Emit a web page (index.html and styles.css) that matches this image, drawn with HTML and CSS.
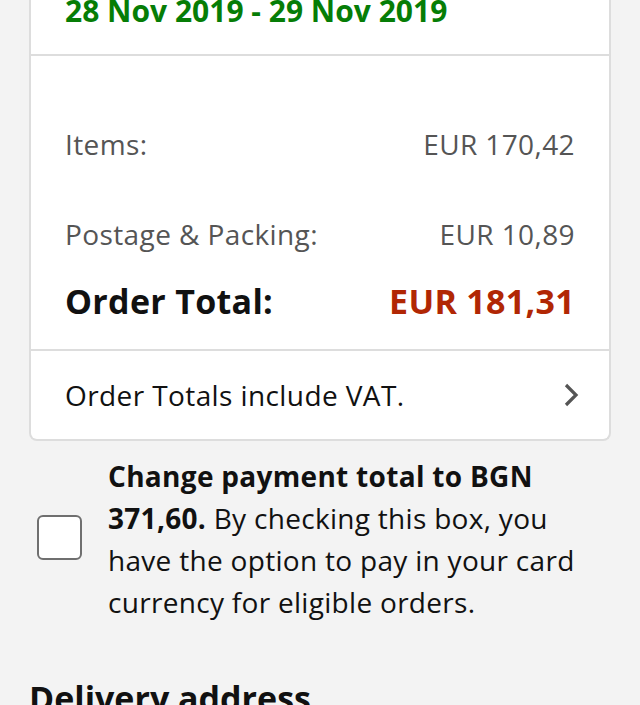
FILE: index.html
```html
<!DOCTYPE html>
<html lang="en">
<head>
    <meta charset="UTF-8">
    <meta name="viewport" content="width=device-width, initial-scale=1.0">
    <title>Order summary</title>
    <link rel="stylesheet" href="styles.css">
</head>
<body>

    <!-- order summary card -->
    <div class="card">
        <div class="delivery-date">28 Nov 2019 - 29 Nov 2019</div>

        <div class="totals">
            <div class="row"><span>Items:</span><span>EUR 170,42</span></div>
            <div class="row"><span>Postage &amp; Packing:</span><span>EUR 10,89</span></div>
            <div class="row total"><span>Order Total:</span><span class="price">EUR 181,31</span></div>
        </div>

        <div class="vat-row">
            <span>Order Totals include VAT.</span>
            <svg class="chevron" width="16" height="26" viewBox="0 0 16 26">
                <path d="M3 3 L13 13 L3 23" fill="none" stroke="#555" stroke-width="3.2"/>
            </svg>
        </div>
    </div>

    <!-- currency option -->
    <div class="currency">
        <div class="checkbox"></div>
        <p><b>Change payment total to BGN 371,60.</b> By checking this box, you have the option to pay in your card currency for eligible orders.</p>
    </div>

    <h2 class="section-title">Delivery address</h2>

</body>
</html>
```

FILE: styles.css
```css
body { margin: 0; background: #f3f3f3; font-family: "Open Sans", "Noto Sans", sans-serif; color: #111; }
.card { margin: -5px 29px 0; background: #fff; border: 2px solid #ddd; border-top: none; border-radius: 0 0 8px 8px; }
.delivery-date { padding: 0 34px; height: 59px; line-height: 31px; font-size: 30px; font-weight: bold; color: #067d06; border-bottom: 2px solid #ddd; }
.totals { padding: 68px 34px 26px; border-bottom: 2px solid #ddd; }
.row { display: flex; justify-content: space-between; font-size: 28px; letter-spacing: 0.4px; color: #555; line-height: 40px; margin-bottom: 50px; }
.row.total { margin: -25px 0 0; font-size: 34px; letter-spacing: 0.3px; font-weight: bold; color: #111; line-height: 44px; }
.price { color: #b12704; }
.vat-row { display: flex; justify-content: space-between; align-items: center; padding: 0 30px 0 34px; height: 88px; font-size: 28px; letter-spacing: 0.4px; }
.currency { display: flex; align-items: center; gap: 26px; margin: 14px 46px 0 37px; }
.checkbox { flex: none; width: 41px; height: 41px; margin-bottom: 4px; border: 2px solid #6f6f6f; border-radius: 6px; background: #fff; }
.currency p { margin: 0; font-size: 28px; letter-spacing: 0.3px; line-height: 42px; }
.section-title { margin: 52px 29px 0; font-size: 34px; }
```
